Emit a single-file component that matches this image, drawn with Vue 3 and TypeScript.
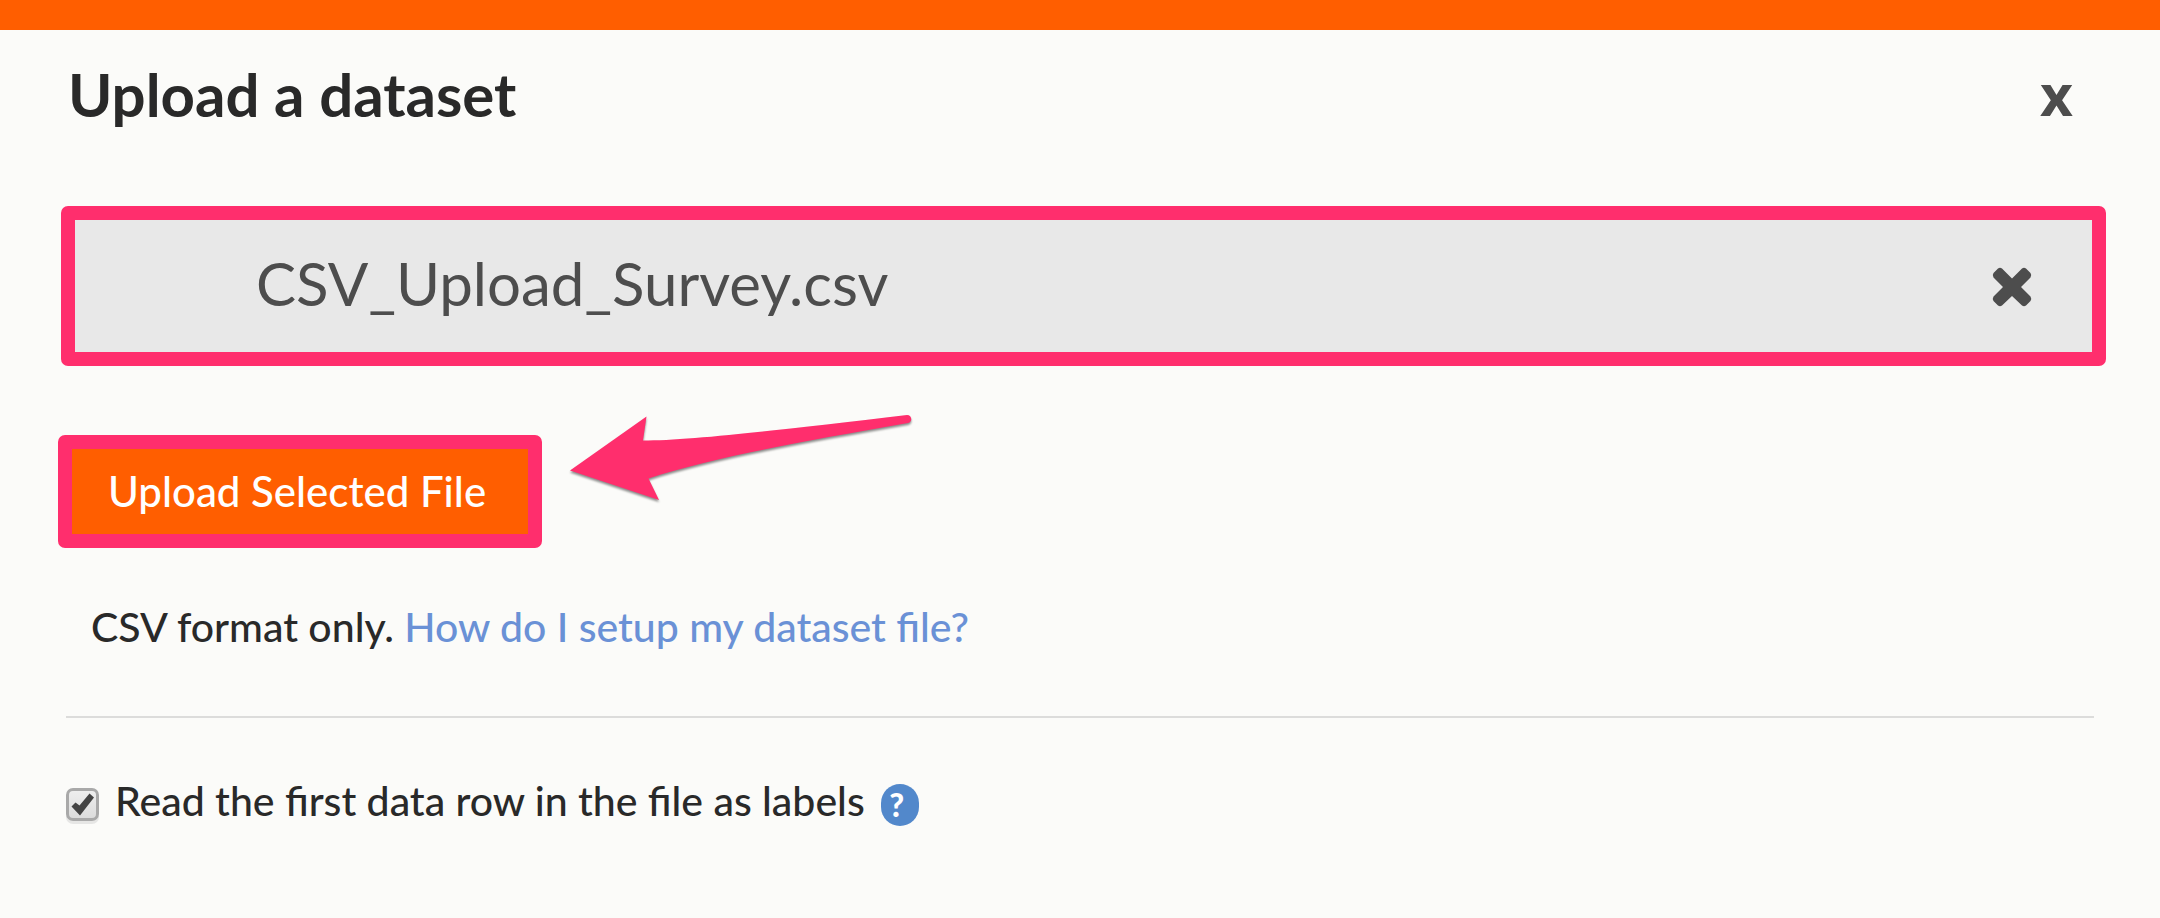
<script setup lang="ts">
import { ref } from 'vue'

const fileName = ref<string>('CSV_Upload_Survey.csv')
const firstRowAsLabels = ref<boolean>(true)
</script>

<template>
  <main class="dialog">
    <header class="header">
      <h1 class="title">Upload a dataset</h1>
      <button class="close" type="button" aria-label="Close">x</button>
    </header>

    <section class="file">
      <span class="file-name">{{ fileName }}</span>
      <button class="remove" type="button" aria-label="Remove file">
        <svg viewBox="0 0 40 40" aria-hidden="true">
          <path d="M6 1.5Q8 0 10 1.5L20 11.5L30 1.5Q32 0 34 1.5L38.5 6Q40 8 38.5 10.5L29 20L38.5 29.5Q40 32 38.5 34L34 38.5Q32 40 30 38.5L20 29L10 38.5Q8 40 6 38.5L1.5 34Q0 32 1.5 29.5L11 20L1.5 10.5Q0 8 1.5 6Z" />
        </svg>
      </button>
    </section>

    <div class="actions">
      <button class="upload" type="button">Upload Selected File</button>
      <svg class="arrow" viewBox="0 0 370 100" aria-hidden="true">
        <path d="M10 60.500L86.500 6.500L83 30.500C130 30.500 220 20 347 5C352 5 353 12 348 13C245 31 150 48 88.500 68.500L99 90Z" />
      </svg>
    </div>

    <p class="hint">CSV format only. <a href="#setup">How do I setup my dataset file?</a></p>

    <hr class="rule" />

    <div class="option">
      <span class="check">
        <input id="labels" v-model="firstRowAsLabels" type="checkbox" />
        <svg v-if="firstRowAsLabels" viewBox="0 0 33 33" aria-hidden="true">
          <path d="M5.500 18.500L9.500 14.500L13.500 17.500L23.500 5.500L28 9.500L14 27.500Z" />
        </svg>
      </span>
      <label for="labels">Read the first data row in the file as labels</label>
      <button class="help" type="button" aria-label="Help">?</button>
    </div>
  </main>
</template>

<style>
body {
  margin: 0;
  background: #fbfbf9;
}
</style>

<style scoped>
.dialog {
  box-sizing: border-box;
  min-height: 100vh;
  padding: 28px 54px 60px 58px;
  border-top: 30px solid #ff5e00;
  background: #fbfbf9;
  color: #292929;
  font-family: Lato, "Open Sans", sans-serif;
  font-size: 41px;
  font-weight: 500;
  line-height: 50px;
}

button {
  margin: 0;
  padding: 0;
  border: 0;
  background: none;
  font-family: inherit;
  font-weight: 500;
  cursor: pointer;
}

.header {
  display: flex;
  align-items: center;
  justify-content: space-between;
  padding: 0 33px 0 10px;
}

.title {
  margin: 0;
  font-size: 60px;
  font-weight: 700;
  line-height: 72px;
}

.close {
  color: #4d4d4d;
  font-family: "Open Sans", sans-serif;
  font-size: 57px;
  font-weight: 700;
  line-height: 72px;
}

.file {
  display: flex;
  align-items: center;
  justify-content: space-between;
  margin: 76px 0 0 3px;
  padding: 27px 60px 26px 181px;
  border: 14px solid #ff2e6d;
  border-radius: 7px;
  background: #e8e8e8;
  color: #4d4d4d;
}

.file-name {
  padding-bottom: 7px;
  font-size: 60px;
  font-weight: 400;
  line-height: 72px;
}

.remove {
  width: 40px;
  height: 40px;
}

.remove svg {
  display: block;
  fill: #4d4d4d;
}

.actions {
  position: relative;
  display: flex;
  margin-top: 69px;
}

.upload {
  padding: 17px 42px 18px 36px;
  border: 14px solid #ff2e6d;
  border-radius: 7px;
  background: #ff5e00;
  color: #fff;
  font-size: 42px;
  line-height: 50px;
}

.arrow {
  position: absolute;
  top: -25px;
  left: 502px;
  width: 370px;
  height: 100px;
  fill: #ff2e6d;
  filter: drop-shadow(0 2px 1px rgba(0, 0, 0, 0.45));
}

.hint {
  margin: 54px 0 0 33px;
}

.hint a {
  color: #6a91d6;
  text-decoration: none;
}

.rule {
  height: 2px;
  margin: 64px 12px 0 8px;
  border: 0;
  background: #dcdcdb;
}

.option {
  display: flex;
  align-items: center;
  margin: 58px 0 0 8px;
}

.option label {
  margin: 0 16px;
  padding-bottom: 7px;
}

.check {
  position: relative;
  width: 33px;
  height: 33px;
}

.check input {
  appearance: none;
  display: block;
  box-sizing: border-box;
  width: 33px;
  height: 33px;
  margin: 0;
  border: 3px solid #a9a9a9;
  border-radius: 7px;
  background: linear-gradient(#eeeeee, #dcdcdc);
  box-shadow: 0 3px 0 #e6e6e5;
}

.check svg {
  position: absolute;
  inset: 0;
  fill: #444;
  pointer-events: none;
}

.help {
  width: 38px;
  height: 42px;
  padding: 0 6px 0 0;
  border-radius: 19px;
  background: #5288cb;
  color: #fff;
  font-size: 32px;
  font-weight: 900;
  line-height: 42px;
}
</style>
